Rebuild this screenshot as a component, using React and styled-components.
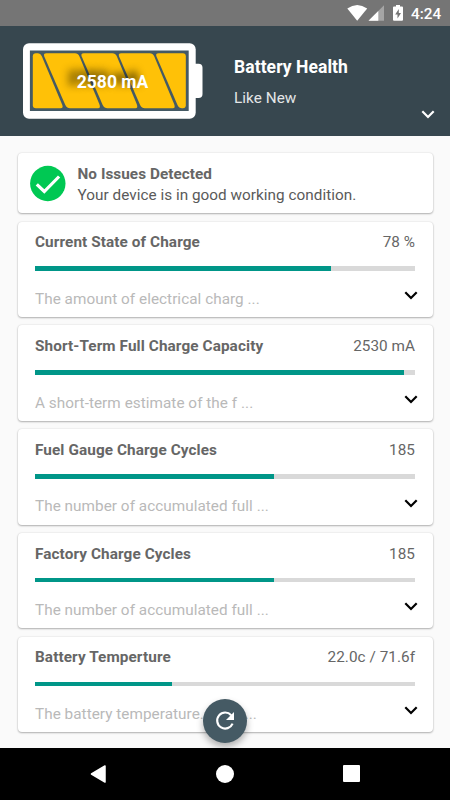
import React from 'react';
import styled, { createGlobalStyle } from 'styled-components';

const GlobalStyle = createGlobalStyle`
  * {
    box-sizing: border-box;
  }
  body {
    margin: 0;
    font-family: Roboto, "Liberation Sans", sans-serif;
    background: #fafafa;
  }
`;

const Screen = styled.div`
  width: 450px;
  height: 800px;
  display: flex;
  flex-direction: column;
  overflow: hidden;
  background: #fafafa;
`;

const StatusBar = styled.div`
  height: 26px;
  flex: none;
  display: flex;
  justify-content: flex-end;
  background: #757575;
`;

const Clock = styled.span`
  width: 39px;
  font-size: 15.3px;
  font-weight: 500;
  line-height: 28px;
  color: #fff;
`;

const Header = styled.header`
  height: 109.5px;
  flex: none;
  display: flex;
  padding: 17px 15px 0 23px;
  background: #37474f;
  color: #fff;
`;

const BatteryBox = styled.div`
  position: relative;
  width: 211px;
  height: 76px;
`;

const BatteryValue = styled.span`
  position: absolute;
  left: 0;
  top: 28px;
  width: 179px;
  text-align: center;
  font-size: 17.5px;
  font-weight: 700;
  line-height: 22px;
  text-shadow: -9px -4px 9px rgba(0, 0, 0, 0.9);
`;

const HeaderText = styled.div`
  flex: 1;
  padding-top: 13px;
`;

const HeaderTitle = styled.h1`
  margin: 0;
  font-size: 17.5px;
  font-weight: 700;
  line-height: 22px;
  letter-spacing: 0.06px;
`;

const HeaderStatus = styled.p`
  margin: 10px 0 0;
  font-size: 15.3px;
  line-height: 20px;
  letter-spacing: 0.05px;
  color: #e4e6e7;
`;

const HeaderArrow = styled.div`
  display: flex;
  align-items: flex-end;
  padding-bottom: 17px;
`;

const Content = styled.main`
  flex: 1;
  display: flex;
  flex-direction: column;
  gap: 8.4px;
  padding: 17.7px 17.5px 0;
`;

const Card = styled.section`
  flex: none;
  height: ${(props) => props.$height}px;
  background: #fff;
  border-radius: 4px;
  box-shadow: 0 1px 2px rgba(0, 0, 0, 0.28), 0 0 2px rgba(0, 0, 0, 0.13);
`;

const IssueCard = styled(Card)`
  display: flex;
  padding: 10.5px 12px 0;
`;

const IssueText = styled.div`
  padding-left: 12px;
  color: #5a5a5a;
`;

const IssueTitle = styled.h2`
  margin: 0;
  font-size: 15.3px;
  font-weight: 700;
  line-height: 20px;
  letter-spacing: 0.05px;
  color: #666;
`;

const IssueMessage = styled.p`
  margin: 1px 0 0;
  font-size: 15.3px;
  line-height: 21px;
  letter-spacing: 0.03px;
`;

const MetricCard = styled(Card)`
  padding: 10.5px 17.5px 0;
`;

const Row = styled.div`
  display: flex;
  justify-content: space-between;
`;

const MetricTitle = styled.h2`
  margin: 0;
  font-size: 15.3px;
  font-weight: 700;
  line-height: 20px;
  letter-spacing: 0.1px;
  color: #666;
`;

const MetricValue = styled.span`
  font-size: 15.3px;
  line-height: 20px;
  letter-spacing: 0.04px;
  color: #666;
`;

const Track = styled.div`
  height: 4.6px;
  margin: 14.3px 0 0;
  background: #d9d9d9;
`;

const Fill = styled.div`
  height: 100%;
  background: #009688;
`;

const Description = styled.p`
  margin: 17.8px 0 0;
  font-size: 15.3px;
  line-height: 20px;
  letter-spacing: 0.04px;
  color: #b9b9b9;
`;

const ArrowSlot = styled.div`
  padding: 20px 0 0;
  margin-right: -2.7px;
`;

const RefreshButton = styled.button`
  position: absolute;
  left: 203px;
  top: 699px;
  width: 44px;
  height: 44px;
  padding: 0;
  border: none;
  border-radius: 50%;
  display: flex;
  align-items: center;
  justify-content: center;
  background: #455a64;
  box-shadow: 0 4px 7px rgba(0, 0, 0, 0.3);
`;

const NavBar = styled.nav`
  position: relative;
  height: 52.5px;
  flex: none;
  display: flex;
  align-items: center;
  justify-content: space-between;
  padding: 0 90px;
  background: #000;
`;

const metrics = [
  { title: 'Current State of Charge', value: '78 %', percent: 78, text: 'The amount of electrical charg ...' },
  { title: 'Short-Term Full Charge Capacity', value: '2530 mA', percent: 97, text: 'A short-term estimate of the f ...' },
  { title: 'Fuel Gauge Charge Cycles', value: '185', percent: 63, text: 'The number of accumulated full ...' },
  { title: 'Factory Charge Cycles', value: '185', percent: 63, text: 'The number of accumulated full ...' },
  { title: 'Battery Temperture', value: '22.0c / 71.6f', percent: 36, text: 'The battery temperature. Ideal ...' },
];

const Chevron = ({ color }) => (
  <svg width="14" height="9" viewBox="0 0 14 9" style={{ display: 'block' }}>
    <path d="M1.3 1.3 L7 7 L12.7 1.3" fill="none" stroke={color} strokeWidth="2.2" />
  </svg>
);

const StatusIcons = () => (
  <svg width="64" height="26" viewBox="347 0 64 26">
    <path d="M347.3 8.6 Q357.2 1.2 367.2 8.6 L357.2 20.8Z" fill="#fff" />
    <path d="M384 5.3 V20.8 H368.5Z" fill="#a5a5a5" />
    <path d="M378.3 11 V20.8 H368.5Z" fill="#fff" />
    <path d="M396 5 H400 V6.6 H402 Q403 6.6 403 7.6 V19.8 Q403 20.8 402 20.8 H394 Q393 20.8 393 19.8 V7.6 Q393 6.6 394 6.6 H396Z" fill="#fff" />
    <path d="M398.8 9 L395.2 14.4 H397.5 V18.6 L401 13.1 H398.8Z" fill="#757575" />
  </svg>
);

const Battery = () => (
  <svg width="180" height="76" viewBox="23 43 180 76">
    <rect x="23" y="43.3" width="172.7" height="75.4" rx="6" fill="#fff" />
    <path d="M195 63.8 h3.5 q4 0 4 4 V94 q0 4 -4 4 H195Z" fill="#fff" />
    <rect x="29.9" y="50.5" width="158.8" height="60.5" fill="#455a64" />
    <g fill="#ffc107">
      <path d="M35.8 53.2 H38 Q40.5 53.2 41.7 56 L62.3 105 Q63.5 108.3 60.5 108.3 H35.8 Q32.8 108.3 32.8 105.3 V56.2 Q32.8 53.2 35.8 53.2Z" />
      <path id="cell" d="M46.5 53.2 H75 Q78 53.2 79.5 56.5 L99.3 104 Q101 108.3 98 108.3 H70 Q67 108.3 65.3 105 L44.3 56.5 Q43 53.2 46.5 53.2Z" />
      <use href="#cell" x="37.4" />
      <use href="#cell" x="74.8" />
      <path d="M158.7 53.2 H182.8 Q185.8 53.2 185.8 56.2 V105.3 Q185.8 108.3 182.8 108.3 H182 Q179 108.3 177.5 105 L156.5 56.5 Q155.2 53.2 158.7 53.2Z" />
    </g>
  </svg>
);

const CheckBadge = () => (
  <svg width="36" height="38" viewBox="0 0 36 38">
    <circle cx="17.8" cy="19.5" r="17.7" fill="#00c853" />
    <path d="M6.8 20.3 L14.3 27.5 L29.1 12.5" fill="none" stroke="#fff" strokeWidth="3.2" />
  </svg>
);

const Metric = ({ title, value, percent, text }) => (
  <MetricCard $height={95.4}>
    <Row>
      <MetricTitle>{title}</MetricTitle>
      <MetricValue>{value}</MetricValue>
    </Row>
    <Track>
      <Fill style={{ width: `${percent}%` }} />
    </Track>
    <Row>
      <Description>{text}</Description>
      <ArrowSlot>
        <Chevron color="#000" />
      </ArrowSlot>
    </Row>
  </MetricCard>
);

const App = () => {
  return (
    <>
      <GlobalStyle />
      <Screen>
        <StatusBar>
          <StatusIcons />
          <Clock>4:24</Clock>
        </StatusBar>
        <Header>
          <BatteryBox>
            <Battery />
            <BatteryValue>2580 mA</BatteryValue>
          </BatteryBox>
          <HeaderText>
            <HeaderTitle>Battery Health</HeaderTitle>
            <HeaderStatus>Like New</HeaderStatus>
          </HeaderText>
          <HeaderArrow>
            <Chevron color="#fff" />
          </HeaderArrow>
        </Header>
        <Content>
          <IssueCard $height={60.1}>
            <CheckBadge />
            <IssueText>
              <IssueTitle>No Issues Detected</IssueTitle>
              <IssueMessage>Your device is in good working condition.</IssueMessage>
            </IssueText>
          </IssueCard>
          {metrics.map((metric) => (
            <Metric key={metric.title} {...metric} />
          ))}
        </Content>
        <RefreshButton aria-label="Refresh">
          <svg width="20" height="20" viewBox="0 0 20 20">
            <path d="M16.2 4.2 A8 8 0 1 0 17.6 12.6" fill="none" stroke="#fff" strokeWidth="2.2" />
            <path d="M19 1 V9 H11Z" fill="#fff" />
          </svg>
        </RefreshButton>
        <NavBar>
          <svg width="17" height="20" viewBox="0 0 17 20">
            <path d="M15 2 L1.5 10 L15 18Z" fill="#fff" stroke="#fff" strokeWidth="1.5" strokeLinejoin="round" />
          </svg>
          <svg width="18" height="18" viewBox="0 0 18 18">
            <circle cx="9" cy="9" r="9" fill="#fff" />
          </svg>
          <svg width="17" height="17" viewBox="0 0 17 17">
            <rect width="17" height="17" rx="1" fill="#fff" />
          </svg>
        </NavBar>
      </Screen>
    </>
  );
};

export default App;
